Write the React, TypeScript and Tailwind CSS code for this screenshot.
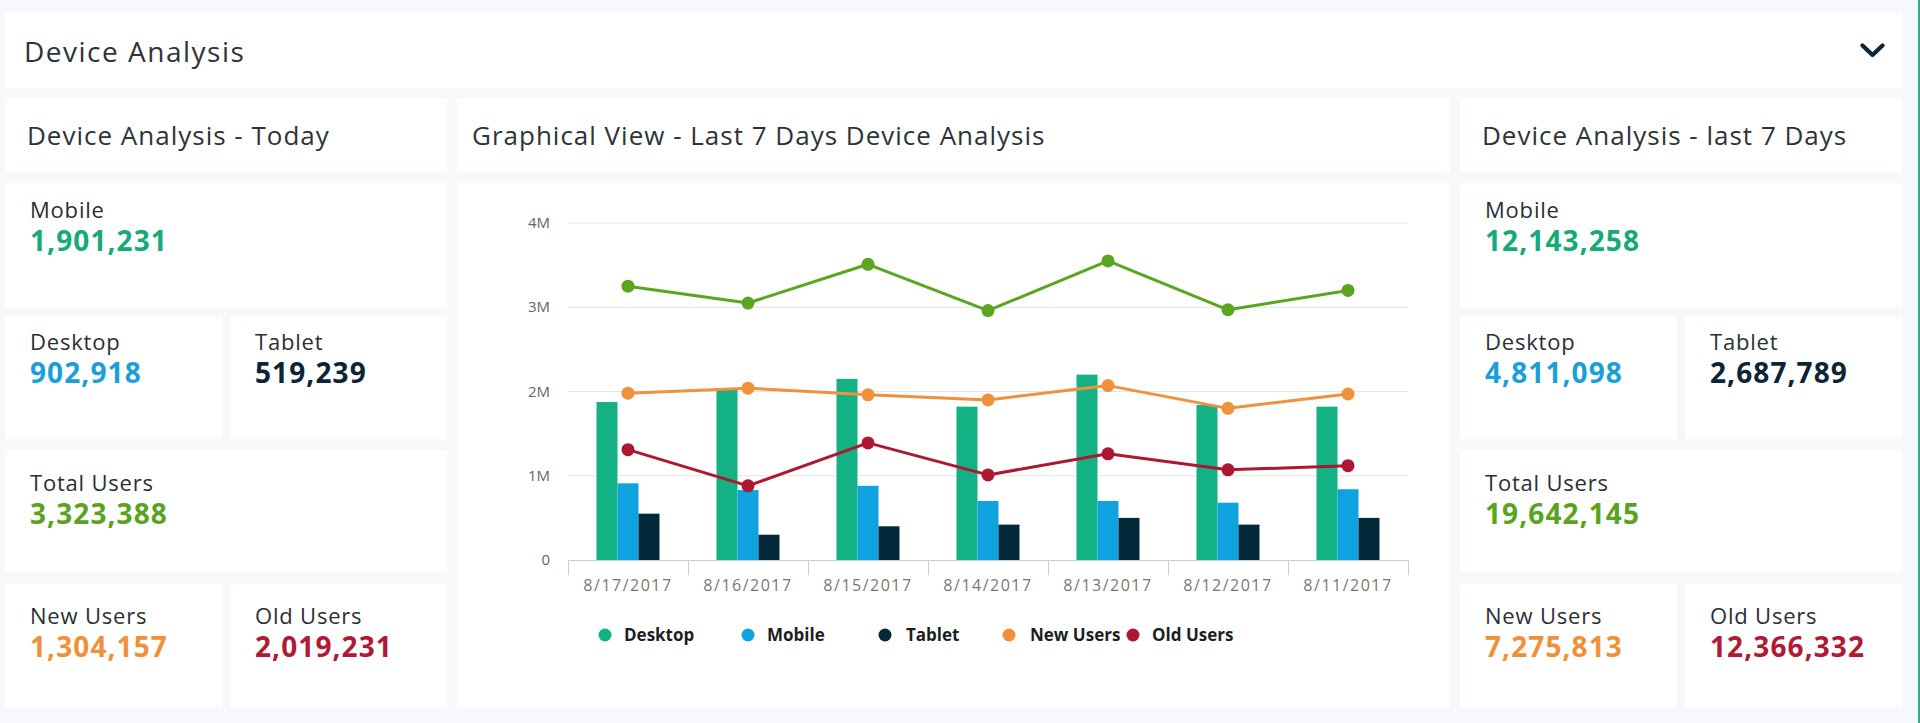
const FONT = { fontFamily: '"Open Sans", "Noto Sans", sans-serif' }

const DATES = ['8/17/2017', '8/16/2017', '8/15/2017', '8/14/2017', '8/13/2017', '8/12/2017', '8/11/2017']

// values in millions, read off the original chart
const DESKTOP = [1.875, 2.04, 2.15, 1.82, 2.2, 1.84, 1.82]
const MOBILE = [0.91, 0.83, 0.88, 0.7, 0.7, 0.68, 0.84]
const TABLET = [0.55, 0.3, 0.4, 0.42, 0.5, 0.42, 0.5]
const TOTAL = [3.25, 3.05, 3.51, 2.96, 3.55, 2.97, 3.2]
const NEW_USERS = [1.98, 2.04, 1.96, 1.9, 2.07, 1.8, 1.97]
const OLD_USERS = [1.31, 0.88, 1.39, 1.01, 1.26, 1.07, 1.12]

const C = {
  desktop: '#14b185',
  mobile: '#0ea2de',
  tablet: '#03283a',
  total: '#5ba51f',
  newUsers: '#f0913b',
  oldUsers: '#ae1731',
}

const X0 = 111
const CAT = 120
const Y0 = 377
const UNIT = 84.25
const BAR = 21

const cx = (i: number) => X0 + CAT * i + CAT / 2
const vy = (v: number) => Y0 - v * UNIT

function Card({ label, value, color, className = '' }) {
  return (
    <div className={`bg-white pl-[25px] ${className}`}>
      <div className="text-[22px] leading-[26px] tracking-[0.8px] text-[#2b2f33]">{label}</div>
      <div className="mt-[2px] text-[28px] leading-[32px] font-bold tracking-[1.1px]" style={{ color }}>
        {value}
      </div>
    </div>
  )
}

function StatsColumn({ title, stats }) {
  return (
    <div className="flex w-[442px] flex-col">
      <div className="flex h-[74px] items-center bg-white pl-[22px] text-[26px] tracking-[1px] text-[#2e3338]">
        {title}
      </div>
      <Card className="mt-[11px] h-[124px] pt-[13px]" label="Mobile" value={stats.mobile} color="#16a97c" />
      <div className="mt-[10px] flex h-[122px] gap-[8px]">
        <Card className="flex-1 pt-[11px]" label="Desktop" value={stats.desktop} color="#1a9fd9" />
        <Card className="flex-1 pt-[11px]" label="Tablet" value={stats.tablet} color="#0d2435" />
      </div>
      <Card className="mt-[11px] h-[123px] pt-[19px]" label="Total Users" value={stats.total} color="#5aa321" />
      <div className="mt-[11px] flex h-[123px] gap-[8px]">
        <Card className="flex-1 pt-[18px]" label="New Users" value={stats.newUsers} color="#f0913a" />
        <Card className="flex-1 pt-[18px]" label="Old Users" value={stats.oldUsers} color="#b01a34" />
      </div>
    </div>
  )
}

function Line({ data, color }) {
  const pts = data.map((v, i) => `${cx(i)},${vy(v)}`).join(' ')
  return (
    <g>
      <polyline points={pts} fill="none" stroke={color} strokeWidth={3} strokeLinejoin="round" />
      {data.map((v, i) => (
        <circle key={i} cx={cx(i)} cy={vy(v)} r={6.5} fill={color} />
      ))}
    </g>
  )
}

const LEGEND = [
  { label: 'Desktop', color: C.desktop, dot: 148, text: 167 },
  { label: 'Mobile', color: C.mobile, dot: 291, text: 310 },
  { label: 'Tablet', color: C.tablet, dot: 428, text: 449 },
  { label: 'New Users', color: C.newUsers, dot: 552, text: 573 },
  { label: 'Old Users', color: C.oldUsers, dot: 676, text: 695 },
]

function Chart() {
  return (
    <svg width={993} height={524} className="block">
      {[0, 1, 2, 3, 4].map((m) => (
        <g key={m}>
          {m > 0 && <line x1={X0} x2={X0 + CAT * 7} y1={vy(m)} y2={vy(m)} stroke="#e4e4e4" strokeWidth={1} />}
          <text
            x={93}
            y={vy(m) + 5}
            textAnchor="end"
            fontSize={15}
            fill="#666"
            fontFamily='"Open Sans", sans-serif'
          >
            {m === 0 ? '0' : `${m}M`}
          </text>
        </g>
      ))}

      {DATES.map((d, i) => {
        const c = cx(i)
        return (
          <g key={d}>
            <rect x={c - BAR * 1.5} y={vy(DESKTOP[i])} width={BAR} height={DESKTOP[i] * UNIT} fill={C.desktop} />
            <rect x={c - BAR * 0.5} y={vy(MOBILE[i])} width={BAR} height={MOBILE[i] * UNIT} fill={C.mobile} />
            <rect x={c + BAR * 0.5} y={vy(TABLET[i])} width={BAR} height={TABLET[i] * UNIT} fill={C.tablet} />
            <text
              x={c}
              y={408}
              textAnchor="middle"
              fontSize={16}
              letterSpacing={1.5}
              fill="#777"
              fontFamily='"Open Sans", sans-serif'
            >
              {d}
            </text>
          </g>
        )
      })}

      <line x1={X0} x2={X0 + CAT * 7} y1={Y0 + 0.5} y2={Y0 + 0.5} stroke="#cfcfcf" strokeWidth={1} />
      {Array.from({ length: 8 }).map((_, k) => (
        <line key={k} x1={X0 + CAT * k + 0.5} x2={X0 + CAT * k + 0.5} y1={Y0} y2={Y0 + 15} stroke="#cfcfcf" strokeWidth={1} />
      ))}

      <Line data={TOTAL} color={C.total} />
      <Line data={NEW_USERS} color={C.newUsers} />
      <Line data={OLD_USERS} color={C.oldUsers} />

      {LEGEND.map((l) => (
        <g key={l.label}>
          <circle cx={l.dot} cy={452} r={6.5} fill={l.color} />
          <text x={l.text} y={458} fontSize={17} fontWeight={700} fill="#1c1f22" fontFamily='"Open Sans", sans-serif'>
            {l.label}
          </text>
        </g>
      ))}
    </svg>
  )
}

export default function App() {
  return (
    <div
      className="flex h-[723px] w-[1920px] flex-col gap-[10px] border-r-2 border-[#20b486] bg-[#f7f8fc] pt-[13px] pr-[16px] pl-[5px]"
      style={FONT}
    >
      <div className="flex h-[75px] items-center justify-between bg-white pr-[17px] pl-[19px]">
        <span className="text-[28px] tracking-[1.5px] text-[#2e3338]">Device Analysis</span>
        <svg width={25} height={15} viewBox="0 0 25 15">
          <path d="M2.5 2.5 L12.5 12 L22.5 2.5" fill="none" stroke="#0d2435" strokeWidth={4.2} strokeLinecap="round" strokeLinejoin="round" />
        </svg>
      </div>

      <div className="flex gap-[10px]">
        <StatsColumn
          title="Device Analysis - Today"
          stats={{
            mobile: '1,901,231',
            desktop: '902,918',
            tablet: '519,239',
            total: '3,323,388',
            newUsers: '1,304,157',
            oldUsers: '2,019,231',
          }}
        />

        <div className="flex w-[993px] flex-col">
          <div className="flex h-[74px] items-center bg-white pl-[15px] text-[26px] tracking-[1px] text-[#2e3338]">
            Graphical View - Last 7 Days Device Analysis
          </div>
          <div className="mt-[11px] h-[524px] bg-white">
            <Chart />
          </div>
        </div>

        <StatsColumn
          title="Device Analysis - last 7 Days"
          stats={{
            mobile: '12,143,258',
            desktop: '4,811,098',
            tablet: '2,687,789',
            total: '19,642,145',
            newUsers: '7,275,813',
            oldUsers: '12,366,332',
          }}
        />
      </div>
    </div>
  )
}
